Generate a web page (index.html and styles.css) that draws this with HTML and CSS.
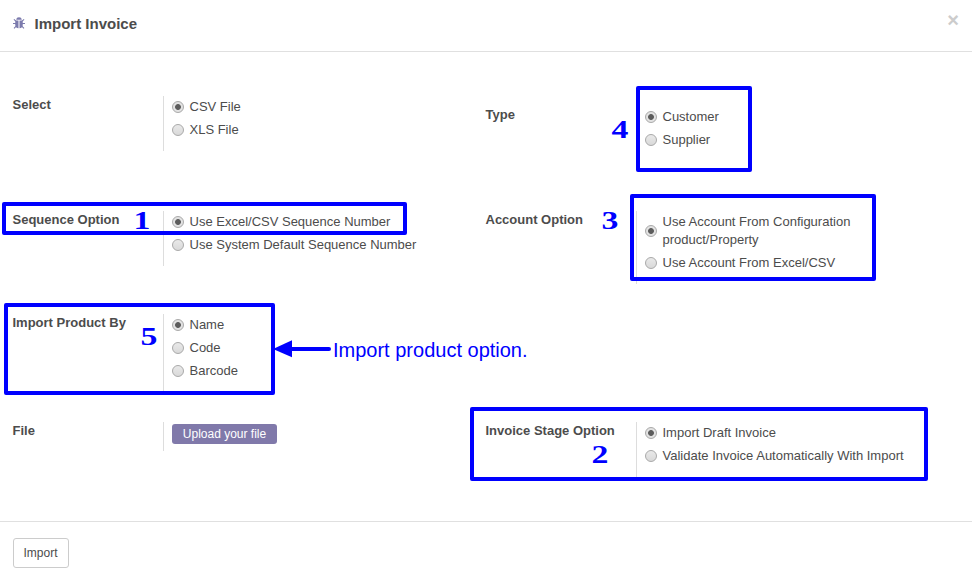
FILE: index.html
```html
<!DOCTYPE html>
<html lang="en">
<head>
<meta charset="utf-8">
<title>Import Invoice</title>
<link rel="stylesheet" href="styles.css">
</head>
<body>
<div class="dialog">
  <header class="header">
    <svg class="bug" viewBox="0 0 12 12" width="12" height="12" aria-hidden="true">
      <path class="bug-body" d="M3.200 2.700C3.400 1 4.400.2 6 .2S8.600 1 8.800 2.700zM2.300 3.500H5.500V11.300C3.400 11.100 2.200 9.800 2.200 7.500zM6.500 3.500H9.700L9.800 7.500C9.800 9.800 8.600 11.100 6.500 11.300z"/>
      <path class="bug-legs" d="M.9 2.300 2.900 4.200M11.100 2.300 9.100 4.200M0 6.500H3M9 6.500h3M1 11.300 3.200 9.100M11 11.300 8.800 9.100"/>
    </svg>
    <h1 class="title">Import Invoice</h1>
    <button class="close" type="button" aria-label="Close">×</button>
  </header>
  <main class="form">
    <div class="row row-select">
      <section class="field">
        <div class="label">Select</div>
        <div class="options">
          <label class="option"><input type="radio" name="file" checked><span>CSV File</span></label>
          <label class="option"><input type="radio" name="file"><span>XLS File</span></label>
        </div>
      </section>
      <section class="field field-type">
        <div class="label">Type</div>
        <div class="options">
          <label class="option"><input type="radio" name="type" checked><span>Customer</span></label>
          <label class="option"><input type="radio" name="type"><span>Supplier</span></label>
        </div>
      </section>
    </div>
    <div class="row row-sequence">
      <section class="field">
        <div class="label">Sequence Option</div>
        <div class="options">
          <label class="option"><input type="radio" name="seq" checked><span>Use Excel/CSV Sequence Number</span></label>
          <label class="option"><input type="radio" name="seq"><span>Use System Default Sequence Number</span></label>
        </div>
      </section>
      <section class="field">
        <div class="label">Account Option</div>
        <div class="options">
          <label class="option"><input type="radio" name="account" checked><span>Use Account From Configuration<br>product/Property</span></label>
          <label class="option"><input type="radio" name="account"><span>Use Account From Excel/CSV</span></label>
        </div>
      </section>
    </div>
    <div class="row row-product">
      <section class="field">
        <div class="label">Import Product By</div>
        <div class="options">
          <label class="option"><input type="radio" name="product" checked><span>Name</span></label>
          <label class="option"><input type="radio" name="product"><span>Code</span></label>
          <label class="option"><input type="radio" name="product"><span>Barcode</span></label>
        </div>
      </section>
    </div>
    <div class="row">
      <section class="field">
        <div class="label">File</div>
        <div class="options options-file"><button class="upload" type="button">Upload your file</button></div>
      </section>
      <section class="field">
        <div class="label">Invoice Stage Option</div>
        <div class="options">
          <label class="option"><input type="radio" name="stage" checked><span>Import Draft Invoice</span></label>
          <label class="option"><input type="radio" name="stage"><span>Validate Invoice Automatically With Import</span></label>
        </div>
      </section>
    </div>
  </main>
  <footer class="footer"><button class="import" type="button">Import</button></footer>

  <div class="mark mark-sequence"></div>
  <div class="mark mark-stage"></div>
  <div class="mark mark-account"></div>
  <div class="mark mark-type"></div>
  <div class="mark mark-product"></div>
  <span class="number number-1">1</span>
  <span class="number number-2">2</span>
  <span class="number number-3">3</span>
  <span class="number number-4">4</span>
  <span class="number number-5">5</span>
  <svg class="arrow" viewBox="0 0 60 18" width="60" height="18" aria-hidden="true">
    <path class="arrow-head" d="M0 9 19 .2V17.200z"/>
    <path class="arrow-line" d="M18 9H56"/>
  </svg>
  <span class="note">Import product option.</span>
</div>
</body>
</html>
```
FILE: styles.css
```css
* { box-sizing: border-box; }

body {
  margin: 0;
  background: #fff;
  color: #4c4c4c;
  font: 13px/18px "Liberation Sans", Arial, sans-serif;
}

button { font-family: inherit; }

.dialog {
  position: relative;
  display: flex;
  flex-direction: column;
  height: 581px;
  overflow: hidden;
}

.header {
  display: flex;
  align-items: flex-start;
  height: 52px;
  padding: 14px 13px 0 12.5px;
  border-bottom: 1px solid #e0e0e0;
}

.bug { margin-top: 3px; }
.bug-body { fill: #7c7bad; }
.bug-legs { fill: none; stroke: #7c7bad; stroke-width: 1.1; }

.title {
  flex: 1;
  margin: 0 0 0 10px;
  font-size: 15px;
  line-height: 20px;
  font-weight: bold;
}

.close {
  margin-top: -4px;
  padding: 0;
  border: 0;
  background: none;
  color: #ccc;
  font-size: 20px;
  line-height: 20px;
  font-weight: bold;
}

.form {
  height: 469px;
  padding: 44px 12.5px 0;
}

.row {
  display: grid;
  grid-template-columns: 473px 1fr;
  align-items: start;
}

.row-select { height: 115px; }
.row-sequence { height: 103px; }
.row-product { height: 108px; }

.field {
  display: grid;
  grid-template-columns: 150.5px 1fr;
}

.field-type { padding-top: 10px; }
.label { font-weight: bold; }

.options {
  padding: 2px 0 7px 8px;
  border-left: 1px solid #ddd;
}

.option {
  display: flex;
  align-items: center;
  gap: 5.5px;
  margin-bottom: 5px;
  white-space: nowrap;
}

.option input {
  appearance: none;
  flex: none;
  width: 12px;
  height: 12px;
  margin: 0;
  border: 1px solid #a9a9a9;
  border-radius: 50%;
  background: linear-gradient(#e9e9e9, #d9d9d9);
}

.option input:checked {
  background: radial-gradient(circle, #5c5c5c 0 2.5px, #e2e2e2 3.3px);
}

.options-file { height: 29px; }

.upload {
  display: block;
  width: 105px;
  height: 20px;
  padding: 0;
  border: 0;
  border-radius: 3px;
  background: #8079aa;
  color: #fff;
  font-size: 12px;
  line-height: 20px;
}

.footer {
  flex: 1;
  padding: 16px 13px 0;
  border-top: 1px solid #e0e0e0;
}

.import {
  display: block;
  width: 56px;
  height: 30px;
  padding: 0 1px 0 0;
  border: 1px solid #ccc;
  border-radius: 3px;
  background: #fff;
  color: #4c4c4c;
  font-size: 12px;
}

/* Annotations laid over the form */
.mark {
  position: absolute;
  border: 4px solid #00f;
  border-radius: 2px;
  pointer-events: none;
}

.mark-sequence { left: 2px; top: 202px; width: 405px; height: 33px; }
.mark-stage { left: 470px; top: 407px; width: 458px; height: 74px; }
.mark-account { left: 630px; top: 194px; width: 246px; height: 87px; }
.mark-type { left: 636px; top: 86px; width: 116px; height: 86px; }
.mark-product { left: 4px; top: 303px; width: 271px; height: 92px; }

.number {
  position: absolute;
  width: 14px;
  color: #00f;
  font: bold 26px/26px "Liberation Serif", serif;
  text-align: center;
  transform: scaleX(1.3);
}

.number-1 { left: 135px; top: 208px; }
.number-2 { left: 593px; top: 442px; }
.number-3 { left: 603px; top: 208px; }
.number-4 { left: 613px; top: 117px; }
.number-5 { left: 142px; top: 324px; }

.arrow { position: absolute; left: 273px; top: 340px; }
.arrow-head { fill: #00f; }
.arrow-line { fill: none; stroke: #00f; stroke-width: 4; stroke-linecap: round; }

.note {
  position: absolute;
  left: 333px;
  top: 338px;
  color: #00f;
  font-size: 20px;
  line-height: 24px;
  white-space: nowrap;
}
```
